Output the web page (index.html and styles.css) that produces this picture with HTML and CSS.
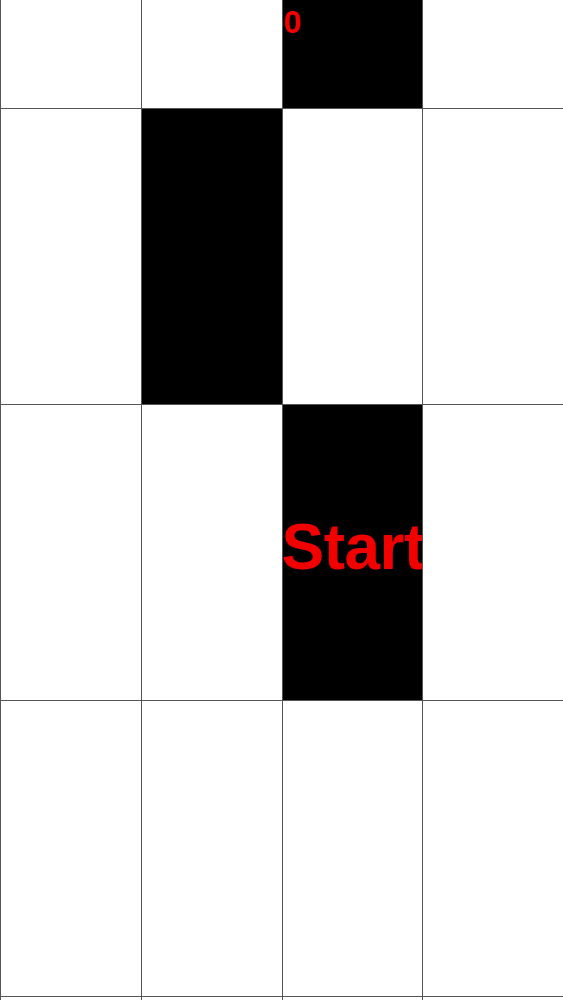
FILE: index.html
```html
<!DOCTYPE html>
<html>
<head>
<meta charset="utf-8">
<link rel="stylesheet" href="styles.css">
</head>
<body>
<div class="game">
  <div class="board">
    <div class="cell"></div><div class="cell"></div><div class="cell black"></div><div class="cell"></div>
    <div class="cell"></div><div class="cell black"></div><div class="cell"></div><div class="cell"></div>
    <div class="cell"></div><div class="cell"></div><div class="cell black start"><span class="start-text">Start</span></div><div class="cell"></div>
    <div class="cell"></div><div class="cell"></div><div class="cell"></div><div class="cell"></div>
    <div class="cell"></div><div class="cell"></div><div class="cell"></div><div class="cell"></div>
  </div>
  <div class="score">0</div>
</div>
</body>
</html>
```

FILE: styles.css
```css
html, body {
  margin: 0;
  padding: 0;
  background: #ffffff;
  overflow: hidden;
}
.game {
  position: relative;
  width: 563px;
  height: 1000px;
  overflow: hidden;
  font-family: "Liberation Sans", Arial, sans-serif;
}
.board {
  display: grid;
  grid-template-columns: repeat(4, 1fr);
  grid-template-rows: 108px 295px 295px 295px 40px;
  gap: 1px;
  padding-left: 1px;
  background: #555555;
  height: 1040px;
}
.cell {
  background: #ffffff;
}
.cell.black {
  background: #000000;
}
.start {
  display: flex;
  align-items: center;
  overflow: hidden;
  white-space: nowrap;
}
.start-text {
  color: #f20000;
  font-weight: bold;
  font-size: 64px;
  letter-spacing: -0.5px;
  margin-left: -1px;
  margin-top: -12px;
}
.score {
  position: absolute;
  left: 50%;
  top: 4px;
  padding-left: 2px;
  color: #f20000;
  font-weight: bold;
  font-size: 32px;
}
```
